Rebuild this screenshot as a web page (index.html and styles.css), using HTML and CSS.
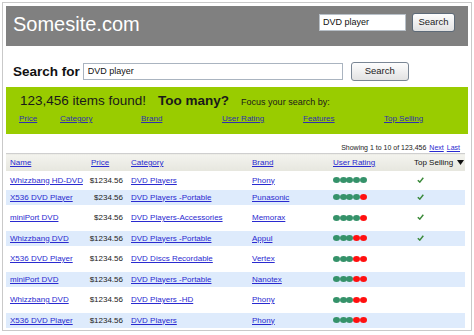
FILE: index.html
```html
<!DOCTYPE html>
<html>
<head>
<meta charset="utf-8">
<link rel="stylesheet" href="styles.css">
</head>
<body>
<div class="frame">
  <header class="topbar">
    <div class="logo">Somesite.com</div>
    <div class="topsearch">
      <div class="tinput">DVD player</div>
      <div class="tbtn">Search</div>
    </div>
  </header>
  <div class="searchrow">
    <span class="label">Search for</span>
    <div class="sinput">DVD player</div>
    <div class="sbtn">Search</div>
  </div>
  <div class="results">
    <div class="found"><span class="count">123,456 items found!</span><span class="many">Too many?</span><span class="focus">Focus your search by:</span></div>
    <div class="facets">
      <a href="#">Price</a><a href="#">Category</a><a href="#">Brand</a><a href="#">User Rating</a><a href="#">Features</a><a href="#">Top Selling</a>
    </div>
  </div>
  <div class="paging">Showing 1 to 10 of 123,456<a href="#">Next</a><a href="#">Last</a></div>
  <table class="grid">
    <colgroup><col class="c-name"><col class="c-price"><col class="c-cat"><col class="c-brand"><col class="c-rate"><col class="c-top"></colgroup>
    <thead>
      <tr>
        <th><a href="#">Name</a></th>
        <th><a href="#">Price</a></th>
        <th><a href="#">Category</a></th>
        <th><a href="#">Brand</a></th>
        <th><a href="#">User Rating</a></th>
        <th class="sorted">Top Selling <svg class="tri" width="7" height="5" viewBox="0 0 7 5"><path d="M0 0H7L3.5 5Z" fill="#111"/></svg></th>
      </tr>
    </thead>
    <tbody>
      <tr class="first">
        <td><a href="#">Whizzbang HD-DVD</a></td><td class="price">$1234.56</td><td><a href="#">DVD Players </a></td><td><a href="#">Phony</a></td>
        <td><span class="rating"><i class="g"></i><i class="g"></i><i class="g"></i><i class="g"></i><i class="g"></i></span></td>
        <td class="top"><svg width="7" height="6" viewBox="0 0 7 6"><path d="M0.8 3.2L2.8 5.1L6.3 0.8" fill="none" stroke="#3b8a3b" stroke-width="1.5"/></svg></td>
      </tr>
      <tr class="alt">
        <td><a href="#">X536 DVD Player</a></td><td class="price">$234.56</td><td><a href="#">DVD Players -Portable</a></td><td><a href="#">Punasonic</a></td>
        <td><span class="rating"><i class="g"></i><i class="g"></i><i class="g"></i><i class="g"></i><i class="r"></i></span></td>
        <td class="top"><svg width="7" height="6" viewBox="0 0 7 6"><path d="M0.8 3.2L2.8 5.1L6.3 0.8" fill="none" stroke="#3b8a3b" stroke-width="1.5"/></svg></td>
      </tr>
      <tr>
        <td><a href="#">miniPort DVD</a></td><td class="price">$234.56</td><td><a href="#">DVD Players-Accessories</a></td><td><a href="#">Memorax</a></td>
        <td><span class="rating"><i class="g"></i><i class="g"></i><i class="g"></i><i class="g"></i><i class="r"></i></span></td>
        <td class="top"><svg width="7" height="6" viewBox="0 0 7 6"><path d="M0.8 3.2L2.8 5.1L6.3 0.8" fill="none" stroke="#3b8a3b" stroke-width="1.5"/></svg></td>
      </tr>
      <tr class="alt">
        <td><a href="#">Whizzbang DVD</a></td><td class="price">$1234.56</td><td><a href="#">DVD Players -Portable</a></td><td><a href="#">Appul </a></td>
        <td><span class="rating"><i class="g"></i><i class="g"></i><i class="g"></i><i class="r"></i><i class="r"></i></span></td>
        <td class="top"><svg width="7" height="6" viewBox="0 0 7 6"><path d="M0.8 3.2L2.8 5.1L6.3 0.8" fill="none" stroke="#3b8a3b" stroke-width="1.5"/></svg></td>
      </tr>
      <tr>
        <td><a href="#">X536 DVD Player</a></td><td class="price">$1234.56</td><td><a href="#">DVD Discs Recordable</a></td><td><a href="#">Vertex</a></td>
        <td><span class="rating"><i class="g"></i><i class="g"></i><i class="g"></i><i class="r"></i><i class="r"></i></span></td>
        <td class="top"></td>
      </tr>
      <tr class="alt">
        <td><a href="#">miniPort DVD</a></td><td class="price">$1234.56</td><td><a href="#">DVD Players -Portable</a></td><td><a href="#">Nanotex</a></td>
        <td><span class="rating"><i class="g"></i><i class="g"></i><i class="g"></i><i class="r"></i><i class="r"></i></span></td>
        <td class="top"></td>
      </tr>
      <tr>
        <td><a href="#">Whizzbang DVD</a></td><td class="price">$1234.56</td><td><a href="#">DVD Players -HD</a></td><td><a href="#">Phony</a></td>
        <td><span class="rating"><i class="g"></i><i class="g"></i><i class="g"></i><i class="r"></i><i class="r"></i></span></td>
        <td class="top"></td>
      </tr>
      <tr class="alt">
        <td><a href="#">X536 DVD Player</a></td><td class="price">$1234.56</td><td><a href="#">DVD Players </a></td><td><a href="#">Phony</a></td>
        <td><span class="rating"><i class="g"></i><i class="g"></i><i class="g"></i><i class="r"></i><i class="r"></i></span></td>
        <td class="top"></td>
      </tr>
    </tbody>
  </table>
</div>
</body>
</html>
```
FILE: styles.css
```css
* { box-sizing: border-box; }
html, body { margin: 0; padding: 0; background: #fff; }
body { font-family: "Liberation Sans", Arial, sans-serif; color: #1a1a1a; }

.frame {
  margin: 2px;
  border: 1px solid #c9c9c9;
  padding: 3px 3px 2px 3px;
}

.topbar {
  height: 40px;
  background: #808080;
  display: flex;
  justify-content: space-between;
  align-items: flex-start;
  padding: 0 13px 0 7px;
}
.logo {
  color: #fff;
  font-size: 20px;
  line-height: 20px;
  margin-top: 8px;
}
.topsearch {
  display: flex;
  align-items: center;
  gap: 6px;
  margin-top: 7px;
}
.tinput {
  width: 87px;
  height: 17px;
  background: #fff;
  border: 1px solid #b8c0c8;
  font-size: 9px;
  line-height: 15px;
  padding-left: 3px;
  color: #111;
}
.tbtn, .sbtn {
  height: 19px;
  border: 1px solid #5d6a78;
  border-radius: 3px;
  background: linear-gradient(#fdfdfd, #e2e2e2);
  font-size: 9.5px;
  line-height: 16px;
  text-align: center;
  color: #222;
}
.tbtn { width: 43px; }

.searchrow {
  display: flex;
  align-items: center;
  padding: 16px 0 6px 7px;
}
.label {
  font-weight: bold;
  font-size: 13.5px;
  line-height: 16px;
  color: #111;
}
.sinput {
  width: 260px;
  height: 17px;
  margin-left: 3px;
  border: 1px solid #aab4c0;
  background: #fff;
  font-size: 9px;
  line-height: 15px;
  padding-left: 4px;
  color: #111;
}
.sbtn {
  width: 58px;
  margin-left: 8px;
  border-color: #7a8694;
}

.results {
  background: #99cc00;
  height: 47px;
  padding: 5px 0 0 14px;
}
.found {
  line-height: 16px;
  white-space: nowrap;
}
.count { font-size: 13.5px; }
.many { font-size: 13.5px; font-weight: bold; margin-left: 12px; }
.focus { font-size: 9px; margin-left: 12px; }
.facets {
  display: grid;
  grid-template-columns: 41px repeat(5, 81px);
  margin-top: 4px;
  padding-left: -1px;
  margin-left: -1px;
  font-size: 8px;
  line-height: 10px;
}
.facets a { color: #3030b0; text-decoration: underline; }

.paging {
  height: 19px;
  padding: 10px 8px 1px 0;
  font-size: 7px;
  line-height: 8px;
  text-align: right;
  color: #222;
}
.paging a { color: #2a2ad0; margin-left: 3px; }

.grid {
  width: 459px;
  table-layout: fixed;
  border-collapse: collapse;
  font-size: 8px;
}
.c-name { width: 81px; }
.c-price { width: 40px; }
.c-cat { width: 121px; }
.c-brand { width: 81px; }
.c-rate { width: 81px; }
.c-top { width: 55px; }

.grid a { color: #2a2ad0; text-decoration: underline; }
.grid th {
  height: 17px;
  border-top: 1px solid #cfcfcf;
  background: linear-gradient(#f3f3ee, #e6e6de);
  font-weight: normal;
  text-align: left;
  padding: 0 0 0 4px;
  white-space: nowrap;
}
.grid th.sorted { color: #111; }
.tri { margin-left: 2px; vertical-align: 0; }
.grid td {
  padding: 0 0 0 4px;
  white-space: nowrap;
  height: 26px;
  vertical-align: middle;
}
.grid tr.first td { height: 19px; }
.grid tr.alt td { height: 15px; background: #deebfc; }
.grid td.price { text-align: right; padding: 0 4px 0 0; color: #222; }
.grid td.top { padding-left: 7px; }

.rating { display: flex; align-items: center; }
.rating i {
  display: block;
  width: 7px;
  height: 6px;
  border-radius: 50%;
  margin-right: -0.3px;
}
.rating i.g { background: #35926a; }
.rating i.r { background: #ff1010; }
```
